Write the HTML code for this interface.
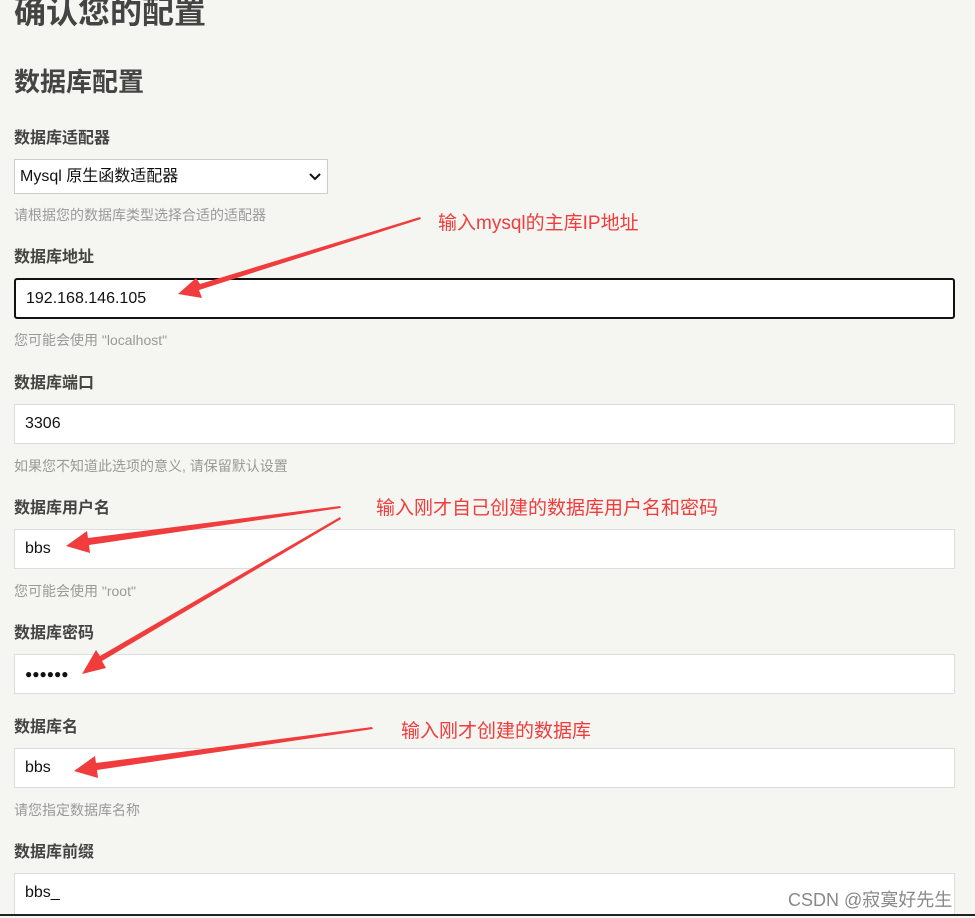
<!DOCTYPE html><html><head><meta charset="utf-8"><style>
body{margin:0;width:975px;height:918px;background:#f5f5f1;position:relative;overflow:hidden;font-family:"Liberation Sans","Noto Sans CJK SC",sans-serif;color:#444}
.a{position:absolute;white-space:nowrap}
.l{font-size:16px;font-weight:bold;color:#444}
.h{font-size:14px;color:#999}
.i{position:absolute;left:14px;width:941px;height:40px;background:#fff;border:1px solid #ddd;box-sizing:border-box;font-size:16px;color:#111;padding-left:10px;line-height:38px}
.r{position:absolute;color:#f03c3c;font-size:19px;white-space:nowrap}
</style></head><body>
<div class="a" style="left:14px;top:-10px;font-size:32px;font-weight:bold;line-height:44px">确认您的配置</div>
<div class="a" style="left:14px;top:65px;font-size:26px;font-weight:bold;line-height:34px">数据库配置</div>
<div class="a l" style="left:14px;top:124px">数据库适配器</div>
<div class="a" style="left:14px;top:159px;width:314px;height:35px;background:#fff;border:1px solid #ccc;box-sizing:border-box;font-size:16px;color:#111;line-height:33px;padding-left:5px">Mysql 原生函数适配器<svg style="position:absolute;right:6px;top:13px" width="12" height="8"><path d="M1 1l5 5 5-5" stroke="#111" stroke-width="2" fill="none"/></svg></div>
<div class="a h" style="left:14px;top:205px">请根据您的数据库类型选择合适的适配器</div>
<div class="a l" style="left:14px;top:243px">数据库地址</div>
<div class="i" style="top:278px;height:41px;border:2px solid #111;border-radius:3px;line-height:37px">192.168.146.105</div>
<div class="a h" style="left:14px;top:330px">您可能会使用 "localhost"</div>
<div class="a l" style="left:14px;top:369px">数据库端口</div>
<div class="i" style="top:404px">3306</div>
<div class="a h" style="left:14px;top:456px">如果您不知道此选项的意义, 请保留默认设置</div>
<div class="a l" style="left:14px;top:494px">数据库用户名</div>
<div class="i" style="top:529px">bbs</div>
<div class="a h" style="left:14px;top:581px">您可能会使用 "root"</div>
<div class="a l" style="left:14px;top:619px">数据库密码</div>
<div class="i" style="top:654px;font-size:12px;font-weight:bold">●●●●●●</div>
<div class="a l" style="left:14px;top:713px">数据库名</div>
<div class="i" style="top:748px">bbs</div>
<div class="a h" style="left:14px;top:800px">请您指定数据库名称</div>
<div class="a l" style="left:14px;top:838px">数据库前缀</div>
<div class="i" style="top:873px;height:42px">bbs_</div>
<div class="a" style="left:788px;top:886px;font-size:18px;color:#888">CSDN @寂寞好先生</div>
<div class="a" style="left:0;top:914px;width:975px;height:2px;background:#222"></div>
<div class="r" style="left:438px;top:208px">输入mysql的主库IP地址</div>
<div class="r" style="left:376px;top:493px">输入刚才自己创建的数据库用户名和密码</div>
<div class="r" style="left:401px;top:716px">输入刚才创建的数据库</div>
<svg class="a" style="left:0;top:0" width="975" height="918">
<g fill="#f03c3c">
<polygon points="420,217 200,284 196,278 178,294 202,298 199,290 421,219"/>
<polygon points="340,506 88,538 87,531 66,546 90,553 89,545 341,508"/>
<polygon points="340,517 100,656 96,650 82,674 106,668 102,661 341,519"/>
<polygon points="372,727 96,763 95,756 74,771 98,778 97,770 373,729"/>
</g></svg>
</body></html>
